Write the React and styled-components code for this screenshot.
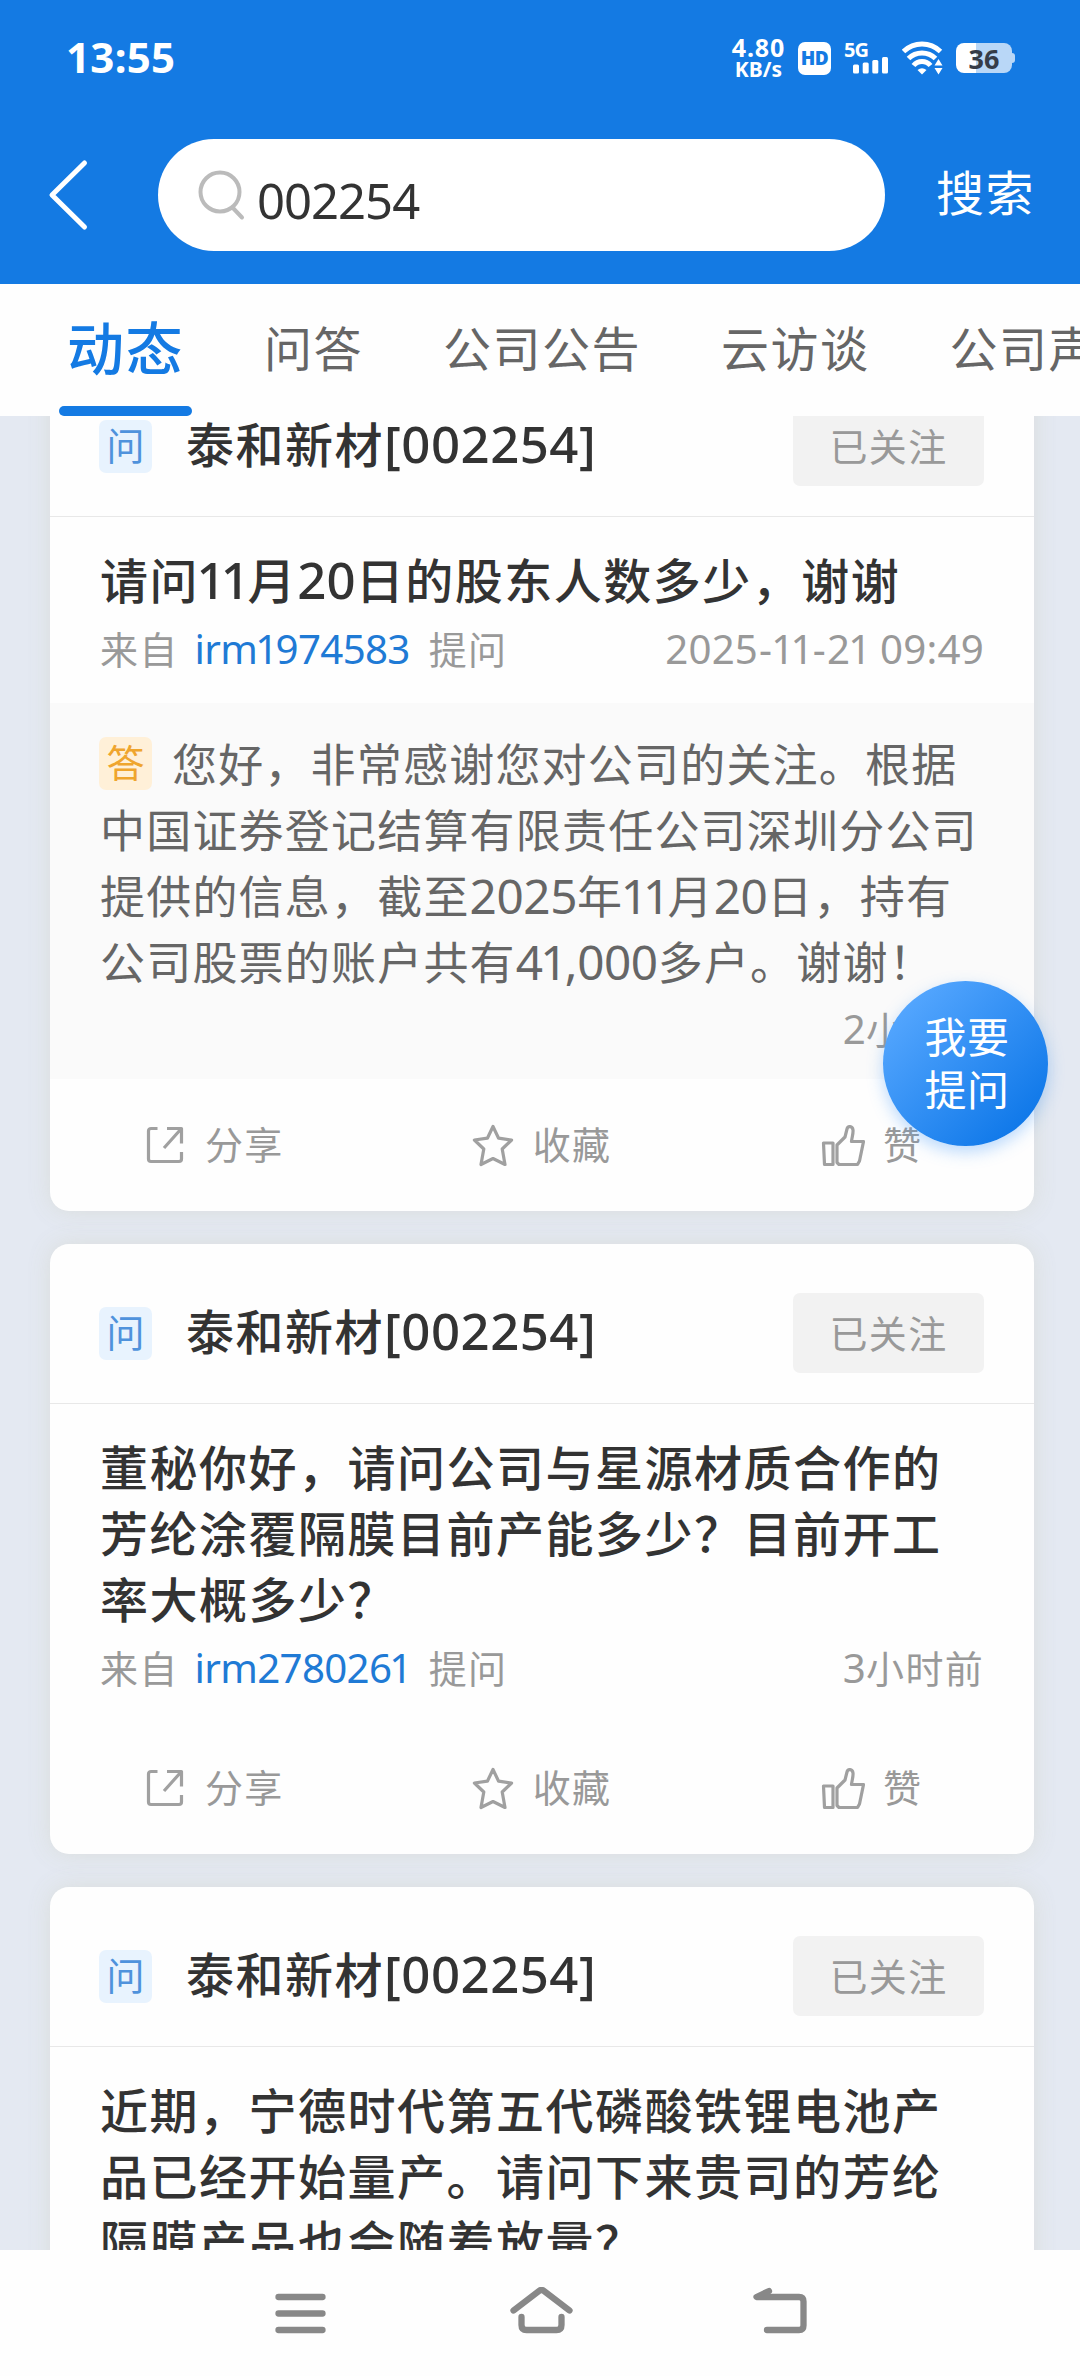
import React from 'react';
import styled, { createGlobalStyle } from 'styled-components';

const tabs = ['动态', '问答', '公司公告', '云访谈', '公司声明'];

const posts = [
  {
    company: '泰和新材[002254]',
    question: ['请问11月20日的股东人数多少，谢谢'],
    user: 'irm1974583',
    time: '2025-11-21 09:49',
    answer: {
      lines: [
        '您好，非常感谢您对公司的关注。根据',
        '中国证券登记结算有限责任公司深圳分公司',
        '提供的信息，截至2025年11月20日，持有',
        '公司股票的账户共有41,000多户。谢谢！'
      ],
      time: '2小时前'
    }
  },
  {
    company: '泰和新材[002254]',
    question: [
      '董秘你好，请问公司与星源材质合作的',
      '芳纶涂覆隔膜目前产能多少？目前开工',
      '率大概多少？'
    ],
    user: 'irm2780261',
    time: '3小时前'
  },
  {
    company: '泰和新材[002254]',
    question: [
      '近期，宁德时代第五代磷酸铁锂电池产',
      '品已经开始量产。请问下来贵司的芳纶',
      '隔膜产品也会随着放量？'
    ],
    user: 'irm2780261',
    time: '3小时前'
  }
];

// Latin runs are set a little larger than the Chinese text around them,
// with a narrow 1 and a wide hyphen
const Mixed = ({ children }) =>
  children.split(/([\x20-\x7e]+)/).map((part, index) =>
    index % 2 ? (
      <Latin key={index}>
        {part.split(/([1-])/).map((char, i) => {
          if (char === '1') return <One key={i}>1</One>;
          if (char === '-') return <Hyphen key={i}>-</Hyphen>;
          return char;
        })}
      </Latin>
    ) : (
      part
    )
  );

const ShareIcon = () => (
  <ActionIcon viewBox="0 0 44 44">
    <path d="M14.5 5.5H8A2.5 2.5 0 0 0 5.5 8v28A2.5 2.5 0 0 0 8 38.5h28a2.5 2.5 0 0 0 2.5-2.5v-7" />
    <path d="M24 5.5h14.5v15M38 6L21 25" />
  </ActionIcon>
);

const StarIcon = () => (
  <ActionIcon viewBox="0 0 44 44">
    <path d="M22 3.5l5.6 11.7 13 1.8-9.4 9 2.8 15.5L22 35.5 10 41.5 12.8 26 3.4 17l13-1.8z" />
  </ActionIcon>
);

const LikeIcon = () => (
  <ActionIcon viewBox="0 0 44 44">
    <path d="M2.5 20H12v21.5H3.5z" />
    <path d="M16 22l8-8 2-8c.8-3.5 5.5-3 6 1 .4 3.5-1 7-1.5 11.5h12l-4 19.500-2 3.500H18l-2-2z" />
  </ActionIcon>
);

const Actions = () => (
  <ActionBar>
    <Action><ShareIcon /><span>分享</span></Action>
    <Action $offset="3px"><StarIcon /><span>收藏</span></Action>
    <Action $offset="6px"><LikeIcon /><span>赞</span></Action>
  </ActionBar>
);

const Post = ({ post }) => (
  <Card>
    <CardHeader>
      <Badge>问</Badge>
      <Company><Mixed>{post.company}</Mixed></Company>
      <FollowButton>已关注</FollowButton>
    </CardHeader>
    <Question>
      {post.question.map((line) => (
        <QuestionLine key={line}><Mixed>{line}</Mixed></QuestionLine>
      ))}
      <Meta>
        <span>来自</span>
        <User><Mixed>{post.user}</Mixed></User>
        <span>提问</span>
        <Time><Mixed>{post.time}</Mixed></Time>
      </Meta>
    </Question>
    {post.answer && (
      <Answer>
        {post.answer.lines.map((line, index) => (
          <AnswerLine key={line}>
            {index === 0 && <Badge $answer>答</Badge>}
            <span><Mixed>{line}</Mixed></span>
          </AnswerLine>
        ))}
        <AnswerTime><Mixed>{post.answer.time}</Mixed></AnswerTime>
      </Answer>
    )}
    <Actions />
  </Card>
);

const App = () => (
  <Screen>
    <GlobalStyle />
    <StatusBar>
      <Clock>13:55</Clock>
      <StatusIcons>
        <NetSpeed>
          <span>4.80</span>
          <small>KB/s</small>
        </NetSpeed>
        <HdBadge>HD</HdBadge>
        <Signal>
          <b>5G</b>
          <svg width="36" height="17" viewBox="0 0 36 17" fill="#fff">
            <rect x="0" y="7.5" width="6" height="9" rx="1.5" />
            <rect x="9.7" y="5.5" width="6" height="11" rx="1.5" />
            <rect x="19.3" y="3" width="6" height="13.5" rx="1.5" />
            <rect x="29" y="0" width="6" height="16.5" rx="1.5" />
          </svg>
        </Signal>
        <svg width="41" height="34" viewBox="0 0 41 34" fill="none" stroke="#fff" strokeWidth="5">
          <path d="M1.5 10.5C12 .5 28 .5 38.5 10.5" />
          <path d="M6.5 17.5C14 10 26 10 33.5 17.5" />
          <path d="M11.5 24.5C16 19 24 19 28.5 24.5" />
          <path d="M15.5 29q4.5-3.5 9 0L20 33.5z" fill="#fff" stroke="none" />
          <path d="M36.5 18l4 6.5h-8zM36.5 33.5l4-6.500h-8z" fill="#fff" stroke="none" />
        </svg>
        <Battery>36</Battery>
      </StatusIcons>
    </StatusBar>
    <SearchBar>
      <svg width="46" height="72" viewBox="0 0 46 72" fill="none" stroke="#fff" strokeWidth="5">
        <path d="M38.5 4L6 36l32.5 32" strokeLinecap="round" strokeLinejoin="round" />
      </svg>
      <SearchField>
        <svg width="50" height="54" viewBox="0 0 50 54" fill="none" stroke="#bbb" strokeWidth="4">
          <circle cx="23" cy="24" r="19.5" />
          <path d="M35.5 39.5L45 49.5" strokeLinecap="round" />
        </svg>
        <Keyword>002254</Keyword>
      </SearchField>
      <SearchButton>搜索</SearchButton>
    </SearchBar>
    <TabBar>
      {tabs.map((tab, index) => (
        <Tab key={tab} $active={index === 0}>{tab}</Tab>
      ))}
    </TabBar>
    <Feed>
      {posts.map((post, index) => (
        <Post key={index} post={post} />
      ))}
    </Feed>
    <NavBar>
      <NavIcon viewBox="0 0 64 54">
        <path d="M10.5 10h44M10.5 26.5h44M10.5 43h44" />
      </NavIcon>
      <NavIcon viewBox="0 0 64 54">
        <path d="M4.5 23.5L30 4q2.5-2 5 0l25.5 19.5" />
        <path d="M12.5 30v8q0 5 5 5h30q5 0 5-5v-8" />
      </NavIcon>
      <NavIcon viewBox="0 0 64 54">
        <path d="M20 4L7.5 10H50q4.5 0 4.5 4.5v24q0 4.5-4.5 4.5H18" />
      </NavIcon>
    </NavBar>
    <AskButton>
      <span>我要</span>
      <span>提问</span>
    </AskButton>
  </Screen>
);

const GlobalStyle = createGlobalStyle`
  * {
    box-sizing: border-box;
  }

  body {
    margin: 0;
    font-family: 'Noto Sans CJK SC', sans-serif;
    background: #fefefe;
  }
`;

const Screen = styled.div`
  position: relative;
  display: flex;
  flex-direction: column;
  width: 1080px;
  height: 2376px;
  overflow: hidden;
  white-space: nowrap;
`;

const Latin = styled.span`
  font-family: 'Noto Sans', sans-serif;
  font-size: 1.06em;
  letter-spacing: 0.005em;
  line-height: 1;
`;

const One = styled.span`
  margin: 0 -0.05em;
`;

const Hyphen = styled.span`
  margin: 0 0.025em;
`;

const StatusBar = styled.div`
  display: flex;
  align-items: center;
  justify-content: space-between;
  height: 116px;
  padding: 0 68px 0 66px;
  color: #fff;
  background: #147ae3;
  font-family: 'Noto Sans', sans-serif;
`;

const Clock = styled.div`
  padding-bottom: 3px;
  font-size: 42px;
  font-weight: 700;
  letter-spacing: 0.3px;
`;

const StatusIcons = styled.div`
  display: flex;
  align-items: center;
  gap: 13px;
`;

const NetSpeed = styled.div`
  display: flex;
  flex-direction: column;
  align-items: center;
  padding-bottom: 1px;
  font-size: 25px;
  font-weight: 700;
  line-height: 22px;
  letter-spacing: 0.8px;

  small {
    font-size: 21px;
    line-height: 22px;
    letter-spacing: 0;
  }
`;

const HdBadge = styled.div`
  width: 33px;
  height: 33px;
  border-radius: 7px;
  color: #147ae3;
  background: #fff;
  font-size: 19px;
  font-weight: 900;
  line-height: 32px;
  letter-spacing: -0.5px;
  text-align: center;
`;

const Signal = styled.div`
  display: flex;
  flex-direction: column;
  width: 45px;
  height: 32px;

  b {
    font-size: 20px;
    line-height: 15px;
    letter-spacing: -1px;
  }

  svg {
    align-self: flex-end;
  }
`;

const Battery = styled.div`
  position: relative;
  width: 56px;
  height: 30px;
  border-radius: 8px;
  color: #363c48;
  background: linear-gradient(to right, #fff 36%, #b9d7f7 36%);
  font-size: 27px;
  font-weight: 700;
  line-height: 31px;
  text-align: center;

  &:after {
    content: '';
    position: absolute;
    top: 10px;
    right: -3px;
    width: 3px;
    height: 10px;
    border-radius: 0 3px 3px 0;
    background: #b9d7f7;
  }
`;

const SearchBar = styled.div`
  display: flex;
  align-items: center;
  height: 168px;
  padding: 0 45px 10px 46px;
  background: #147ae3;
`;

const SearchField = styled.div`
  display: flex;
  align-items: center;
  width: 727px;
  height: 112px;
  margin-left: 66px;
  padding-left: 39px;
  border-radius: 56px;
  background: #fff;
`;

const Keyword = styled.div`
  margin: 10px 0 0 10px;
  color: #333;
  font-family: 'Noto Sans', sans-serif;
  font-size: 49px;
  line-height: 60px;
  letter-spacing: -1px;
`;

const SearchButton = styled.div`
  margin-left: auto;
  padding-bottom: 10px;
  color: #fff;
  font-size: 48px;
  line-height: 60px;
  letter-spacing: 1.5px;
`;

const TabBar = styled.div`
  display: flex;
  flex-shrink: 0;
  gap: 80px;
  height: 132px;
  padding-left: 67px;
  background: #fefefe;
`;

const Tab = styled.div`
  position: relative;
  flex-shrink: 0;
  color: ${props => (props.$active ? '#147ae3' : '#666')};
  font-size: ${props => (props.$active ? '57px' : '48px')};
  font-weight: ${props => (props.$active ? 500 : 400)};
  line-height: ${props => (props.$active ? '123px' : '125px')};
  letter-spacing: 1.5px;

  &:after {
    content: '';
    display: ${props => (props.$active ? 'block' : 'none')};
    position: absolute;
    left: -8px;
    right: -8px;
    bottom: 0;
    height: 10px;
    border-radius: 5px;
    background: #147ae3;
  }
`;

const Feed = styled.div`
  flex: 1;
  min-height: 0;
  padding: 0 46px 0 50px;
  overflow: hidden;
  background: #e4e9f2;
`;

const Card = styled.div`
  margin-bottom: 33px;
  border-radius: 19px;
  background: #fefefe;
  box-shadow: 0 0 22px rgba(216, 220, 216, 0.9);

  &:first-child {
    margin-top: -59px;
  }
`;

const CardHeader = styled.div`
  display: flex;
  align-items: center;
  height: 160px;
  padding: 49px 50px 30px 49px;
  border-bottom: 1px solid #e8e8e8;
`;

const Badge = styled.div`
  flex-shrink: 0;
  width: 53px;
  height: 53px;
  border-radius: 7px;
  color: ${props => (props.$answer ? '#efa52e' : '#4f92dc')};
  background: ${props => (props.$answer ? '#fff0d8' : '#e8f3fe')};
  font-size: 38px;
  line-height: 48px;
  text-align: center;
`;

const Company = styled.div`
  margin-left: 34px;
  padding-bottom: 9px;
  color: #333;
  font-size: 48px;
  font-weight: 500;
  line-height: 70px;
  letter-spacing: 1.5px;

  ${Latin} {
    letter-spacing: 0.01em;
  }
`;

const FollowButton = styled.div`
  width: 191px;
  height: 80px;
  margin-left: auto;
  border-radius: 7px;
  color: #999;
  background: #f2f2f2;
  font-size: 38px;
  line-height: 78px;
  letter-spacing: 1.3px;
  text-align: center;
`;

const Question = styled.div`
  padding: 28px 50px 27px;
`;

const QuestionLine = styled.div`
  height: 66px;
  color: #333;
  font-size: 48px;
  font-weight: 500;
  line-height: 66px;
  letter-spacing: 1.5px;
`;

const Meta = styled.div`
  display: flex;
  height: 56px;
  margin-top: 9px;
  color: #999;
  font-size: 38px;
  line-height: 56px;
  letter-spacing: 1.3px;
`;

const User = styled.span`
  margin: 0 19px 0 16px;
  color: #1f7ad5;

  ${Latin} {
    letter-spacing: -0.017em;
  }
`;

const Time = styled.span`
  margin-left: auto;
`;

const Answer = styled.div`
  height: 376px;
  padding: 27px 50px 0;
  color: #666;
  background: #fafafa;
`;

const AnswerLine = styled.div`
  display: flex;
  align-items: center;
  height: 66px;
  font-size: 45px;
  line-height: 66px;
  letter-spacing: 1.2px;

  ${Badge} {
    margin: 0 20px 0 -1px;
    letter-spacing: 0;
  }

  ${Latin} {
    letter-spacing: -0.009em;
  }
`;

const AnswerTime = styled.div`
  height: 68px;
  color: #999;
  font-size: 38px;
  line-height: 68px;
  letter-spacing: 1.3px;
  text-align: right;
`;

const ActionBar = styled.div`
  display: flex;
  height: 132px;
`;

const Action = styled.div`
  display: flex;
  flex: 1;
  align-items: center;
  justify-content: center;
  gap: 18px;
  padding-left: ${props => props.$offset || '1px'};
  color: #999;
  font-size: 38px;
  letter-spacing: 1.3px;

  span {
    padding-bottom: 6px;
  }
`;

const ActionIcon = styled.svg`
  width: 44px;
  height: 44px;
  fill: none;
  stroke: #a0a0a0;
  stroke-width: 3.2;
  stroke-linejoin: round;
`;

const NavBar = styled.div`
  display: flex;
  justify-content: space-between;
  height: 126px;
  padding: 37px 267px 0 268px;
  background: #fefefe;
`;

const NavIcon = styled.svg`
  width: 64px;
  height: 54px;
  fill: none;
  stroke: #888;
  stroke-width: 6.3;
  stroke-linecap: round;
  stroke-linejoin: round;
`;

const AskButton = styled.div`
  position: absolute;
  top: 981px;
  left: 883px;
  display: flex;
  flex-direction: column;
  align-items: center;
  justify-content: center;
  width: 165px;
  height: 165px;
  padding: 0 0 6px 3px;
  border-radius: 50%;
  color: #fff;
  background: linear-gradient(135deg, #57a8ff 10%, #0c76e8 90%);
  box-shadow: 0 6px 16px rgba(60, 150, 250, 0.35);
  font-size: 42px;
  line-height: 53px;
  letter-spacing: 0.5px;
`;

export default App;
